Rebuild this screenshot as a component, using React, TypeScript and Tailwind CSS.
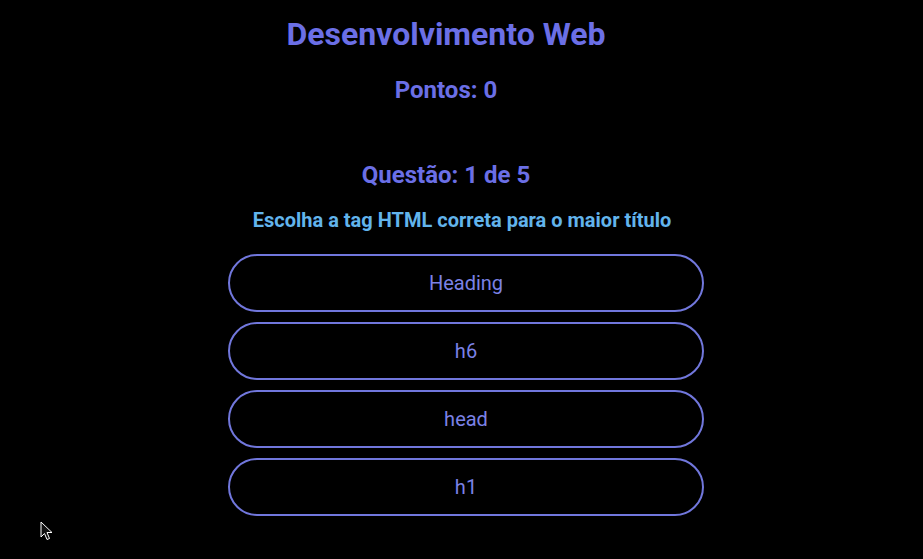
import React from 'react'

const options = ['Heading', 'h6', 'head', 'h1']

export default function App() {
  return (
    <div className="relative min-h-[559px] w-full bg-black font-['Roboto',sans-serif] overflow-hidden">
      <header className="flex flex-col items-center pt-[15px] pr-[31px]">
        <h1 className="text-[32px] font-bold leading-[38px] text-[#6b6fe6]">Desenvolvimento Web</h1>
        <p className="mt-[22px] text-[24px] font-bold leading-[30px] text-[#6b6fe6]">Pontos: 0</p>
        <p className="mt-[55px] text-[24px] font-bold leading-[30px] text-[#6b6fe6]">Questão: 1 de 5</p>
      </header>

      <div className="flex justify-center">
        <div className="ml-[9px] flex flex-col items-center">
          <p className="mt-[18px] pr-[8px] text-[20px] font-bold leading-[24px] text-[#62b4ec]">
            Escolha a tag HTML correta para o maior título
          </p>
          <div className="mt-[22px] flex flex-col gap-[10px]">
            {options.map((o) => (
              <button
                key={o}
                className="h-[58px] w-[476px] rounded-full border-2 border-[#7177dc] bg-black text-[20px] text-[#7b82e6]"
              >
                {o}
              </button>
            ))}
          </div>
        </div>
      </div>

      <svg className="absolute left-[40px] top-[521px]" width="14" height="20" viewBox="0 0 14 20">
        <path d="M1 1 L1 16 L4.5 12.5 L7 18.5 L9.5 17.5 L7 11.5 L12 11.5 Z" fill="#111" stroke="#fff" strokeWidth="1" />
      </svg>
    </div>
  )
}
